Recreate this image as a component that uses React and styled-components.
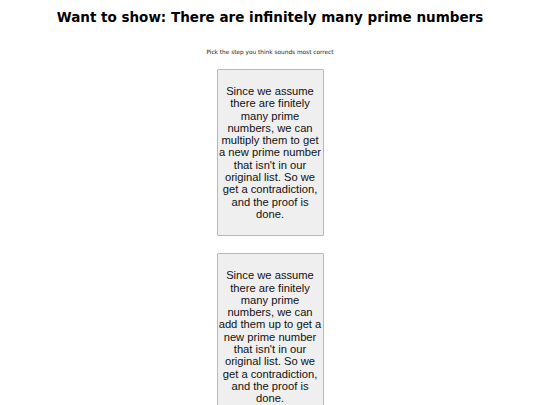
import React from "react";
import styled, { createGlobalStyle } from "styled-components";

const Global = createGlobalStyle`
  html, body {
    margin: 0;
    padding: 0;
    background: #ffffff;
  }
`;

const Page = styled.div`
  display: flex;
  flex-direction: column;
  align-items: center;
  padding-top: 8px;
  font-family: "DejaVu Sans", Verdana, sans-serif;
  color: #000;
`;

const Title = styled.h1`
  margin: 0;
  font-size: 13.5px;
  font-weight: bold;
  line-height: 18px;
`;

const Hint = styled.p`
  margin: 23px 0 0;
  font-size: 5.8px;
  line-height: 7px;
  color: #222;
`;

const Options = styled.div`
  display: flex;
  flex-direction: column;
  align-items: center;
  gap: 17px;
  margin-top: 13px;
`;

const Step = styled.button`
  box-sizing: border-box;
  width: 107px;
  padding: 15px 1px;
  background: #efefef;
  border: 1px solid #b9b9b9;
  border-radius: 1px;
  font-family: "Liberation Sans", Arial, sans-serif;
  font-size: 11.2px;
  line-height: 12.3px;
  color: #111;
  text-align: center;
`;

const steps = [
  "Since we assume there are finitely many prime numbers, we can multiply them to get a new prime number that isn't in our original list. So we get a contradiction, and the proof is done.",
  "Since we assume there are finitely many prime numbers, we can add them up to get a new prime number that isn't in our original list. So we get a contradiction, and the proof is done.",
];

export default function App() {
  return (
    <>
      <Global />
      <Page>
        <Title>Want to show: There are infinitely many prime numbers</Title>
        <Hint>Pick the step you think sounds most correct</Hint>
        <Options>
          {steps.map((s, i) => (
            <Step key={i}>{s}</Step>
          ))}
        </Options>
      </Page>
    </>
  );
}
